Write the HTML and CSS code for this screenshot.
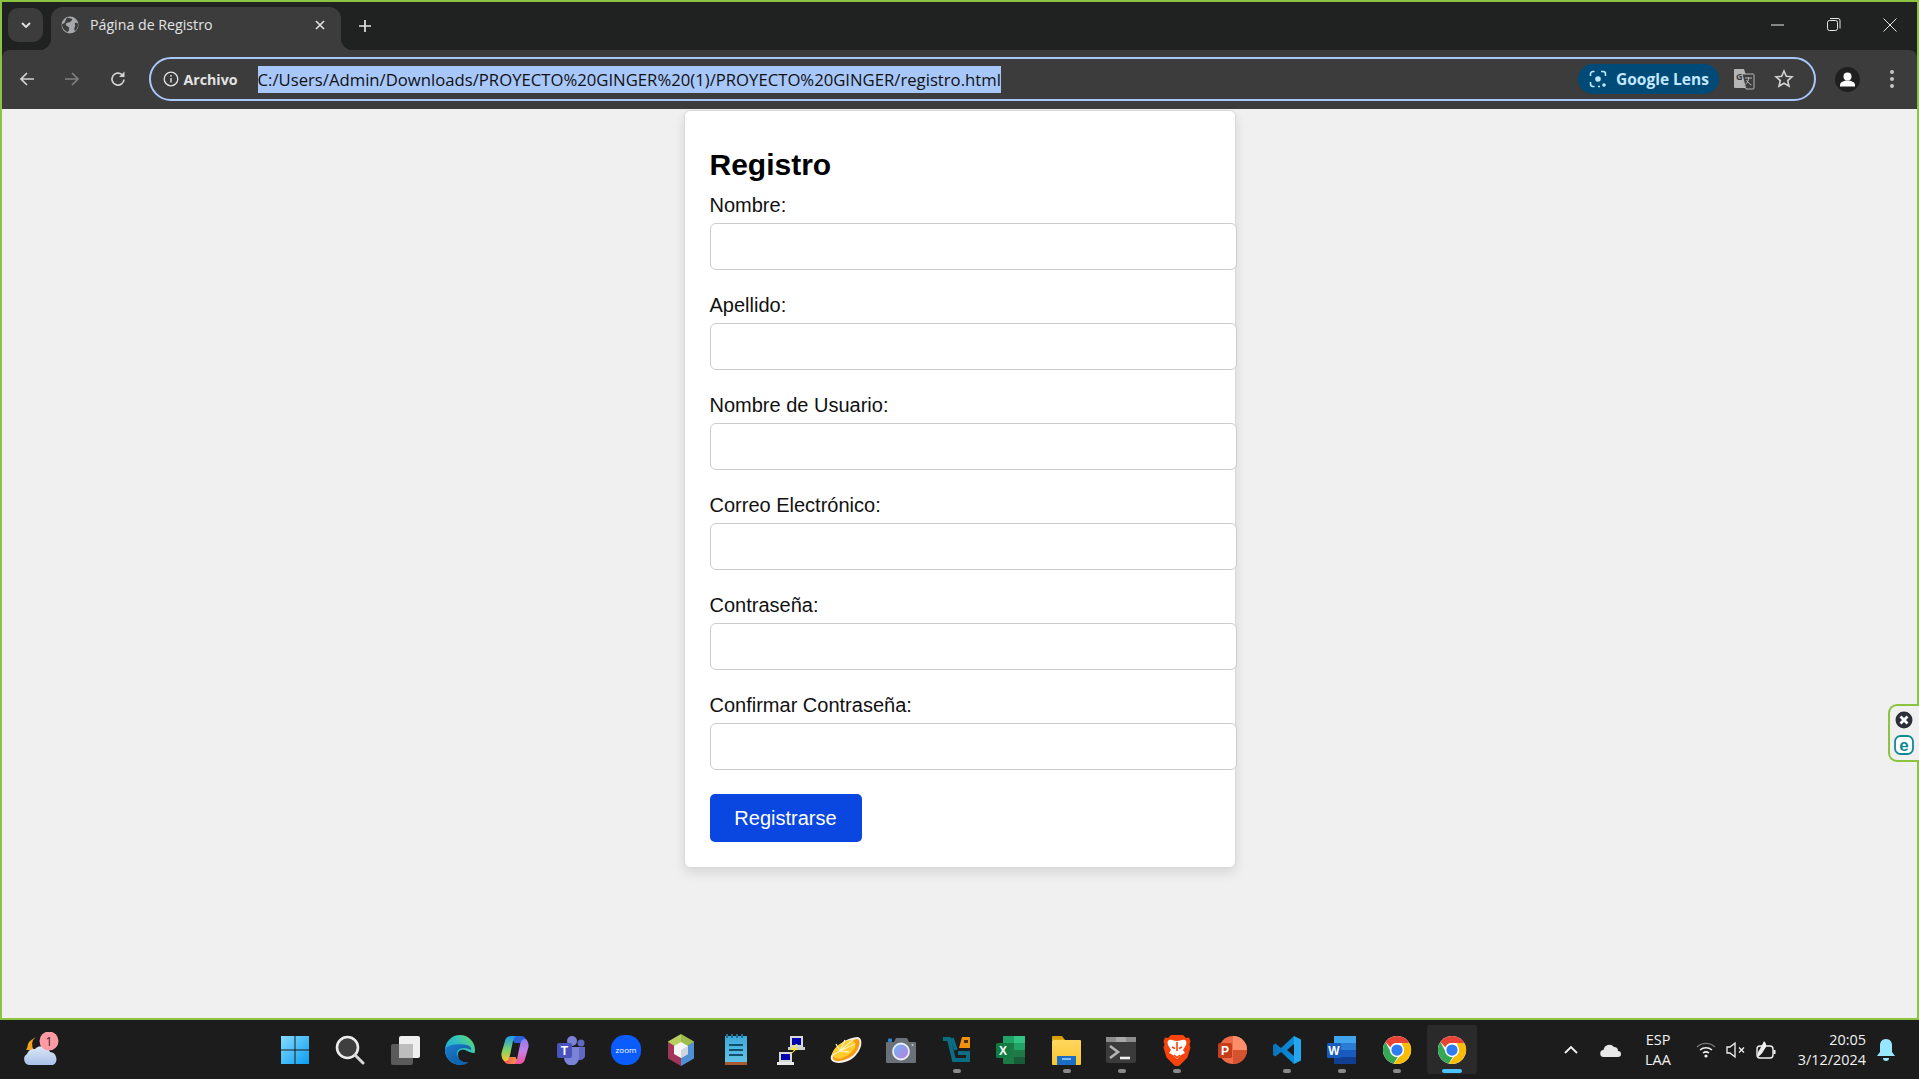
FILE: index.html
```html
<!DOCTYPE html>
<html lang="es">
  <head>
    <meta charset="UTF-8" />
    <meta name="viewport" content="width=device-width, initial-scale=1.0" />
    <title>Página de Registro</title>
    <link rel="stylesheet" href="styles.css">
  </head>
  <body>
    <!-- Shared icons -->
    <svg class="defs" width="0" height="0">
      <defs>
        <linearGradient id="winGrad" x1="0" y1="0" x2="1" y2="1"><stop offset="0" stop-color="#86dcff"/><stop offset="1" stop-color="#0a9df0"/></linearGradient>
        <linearGradient id="edgeTop" x1="0" y1="1" x2="1" y2="0"><stop offset="0" stop-color="#1b9de2"/><stop offset=".6" stop-color="#2fc0c0"/><stop offset="1" stop-color="#6ee05c"/></linearGradient>
        <linearGradient id="edgeLow" x1="0" y1="0" x2="1" y2="1"><stop offset="0" stop-color="#1c7fd0"/><stop offset="1" stop-color="#0c4f96"/></linearGradient>
        <linearGradient id="copA" x1="0" y1="0" x2="0" y2="1"><stop offset="0" stop-color="#1a9af0"/><stop offset=".55" stop-color="#7dd36a"/><stop offset="1" stop-color="#f7c632"/></linearGradient>
        <linearGradient id="copB" x1="0" y1="0" x2="0" y2="1"><stop offset="0" stop-color="#8f7cf0"/><stop offset=".5" stop-color="#c77fe6"/><stop offset="1" stop-color="#f0509a"/></linearGradient>
        <linearGradient id="copC" x1="0" y1="0" x2="1" y2="0"><stop offset="0" stop-color="#f04a5c"/><stop offset="1" stop-color="#f9a03c"/></linearGradient>
        <linearGradient id="folderGrad" x1="0" y1="0" x2="0" y2="1"><stop offset="0" stop-color="#ffd65e"/><stop offset="1" stop-color="#fbc531"/></linearGradient>
        <linearGradient id="noteGrad" x1="0" y1="0" x2="0" y2="1"><stop offset="0" stop-color="#3fa9d8"/><stop offset="1" stop-color="#62c4e6"/></linearGradient>
        <linearGradient id="cloudGrad" x1="0" y1="0" x2="0" y2="1"><stop offset="0" stop-color="#dce7f7"/><stop offset="1" stop-color="#a9c2ea"/></linearGradient>
        <linearGradient id="lensGrad" x1="0" y1="0" x2="1" y2="1"><stop offset="0" stop-color="#6ab8f0"/><stop offset="1" stop-color="#c07ae0"/></linearGradient>
        <linearGradient id="codeGrad" x1="0" y1="0" x2="1" y2="0"><stop offset="0" stop-color="#0a72b8"/><stop offset="1" stop-color="#0c8fdc"/></linearGradient>
        <symbol id="chromeIcon" viewBox="0 0 32 32">
          <circle cx="16" cy="16" r="15" fill="#fff"/>
          <path d="M16 1a15 15 0 0 1 13 7.500H16a7.500 7.500 0 0 0-7 4.700L3.700 7.400A15 15 0 0 1 16 1z" fill="#ea4335"/>
          <path d="M3.700 7.400 10 19.500a7.500 7.500 0 0 0 6.800 4L12.500 30.500A15 15 0 0 1 3.700 7.400z" fill="#34a853"/>
          <path d="M29 8.500a15 15 0 0 1-16.500 22L18.800 23a7.500 7.500 0 0 0 3.400-11l-1-3.500z" fill="#fbbc04"/>
          <circle cx="16" cy="16" r="7.500" fill="#fff"/>
          <circle cx="16" cy="16" r="6" fill="#2f7cf0"/>
        </symbol>
      </defs>
    </svg>

    <div class="window">
      <!-- Title bar -->
      <header class="titlebar">
        <div class="tab-search">
          <svg width="12" height="12" viewBox="0 0 12 12"><path d="M2 4l4 4 4-4" fill="none" stroke="#e3e3e3" stroke-width="1.800"/></svg>
        </div>
        <div class="tab">
          <svg class="favicon" width="18" height="18" viewBox="0 0 18 18">
            <circle cx="9" cy="9" r="8.500" fill="#a6a8ab"/>
            <path d="M6 1.500c2 1 4 .500 5 1.500s-1 2-2 3-3 0-4 1.500 1 2.500 2.500 3.500.500 3-.500 5C3 15 .800 11 1 8c1-.500 2.500-.500 3-2s1-3 2-4.500zM14 7c1.500-.500 2.500 0 3 1 .200 3-1 5.500-3 7-1-1.500-1-3 0-4.500s-1-2 0-3.500z" fill="#3c3c3c"/>
          </svg>
          <span class="tab-title">Página de Registro</span>
          <svg class="tab-close" width="12" height="12" viewBox="0 0 12 12"><path d="M2 2l8 8M10 2l-8 8" stroke="#e3e3e3" stroke-width="1.600"/></svg>
        </div>
        <svg class="new-tab" width="14" height="14" viewBox="0 0 14 14"><path d="M7 1v12M1 7h12" stroke="#e3e3e3" stroke-width="1.700"/></svg>
        <div class="win-controls">
          <span class="win-btn"><svg width="14" height="14" viewBox="0 0 14 14"><path d="M0 7h13" stroke="#e8e8e8" stroke-width="1"/></svg></span>
          <span class="win-btn"><svg width="14" height="14" viewBox="0 0 14 14"><rect x=".5" y="2.500" width="10" height="10" rx="2" fill="none" stroke="#e8e8e8"/><path d="M3 .5h8a2 2 0 0 1 2 2v8" fill="none" stroke="#e8e8e8"/></svg></span>
          <span class="win-btn"><svg width="14" height="14" viewBox="0 0 14 14"><path d="M.5.5l13 13M13.500.5l-13 13" stroke="#e8e8e8"/></svg></span>
        </div>
      </header>

      <!-- Toolbar -->
      <nav class="toolbar">
        <span class="nav-btn"><svg width="18" height="18" viewBox="0 0 18 18"><path d="M16 9H3M9 3 3 9l6 6" fill="none" stroke="#d2d2d2" stroke-width="1.700"/></svg></span>
        <span class="nav-btn"><svg width="18" height="18" viewBox="0 0 18 18"><path d="M2 9h13M9 3l6 6-6 6" fill="none" stroke="#808080" stroke-width="1.700"/></svg></span>
        <span class="nav-btn"><svg width="18" height="18" viewBox="0 0 18 18"><path d="M15 9.500A6 6 0 1 1 13 4.600" fill="none" stroke="#d2d2d2" stroke-width="1.700"/><path d="M15.500 1.500v5.500H10z" fill="#d2d2d2"/></svg></span>
        <div class="address">
          <svg width="16" height="16" viewBox="0 0 16 16"><circle cx="8" cy="8" r="6.800" fill="none" stroke="#e3e3e3" stroke-width="1.300"/><path d="M8 7v4.500" stroke="#e3e3e3" stroke-width="1.400"/><circle cx="8" cy="4.800" r=".9" fill="#e3e3e3"/></svg>
          <span class="scheme">Archivo</span>
          <span class="url">C:/Users/Admin/Downloads/PROYECTO%20GINGER%20(1)/PROYECTO%20GINGER/registro.html</span>
          <span class="lens">
            <svg width="18" height="18" viewBox="0 0 18 18"><path d="M1.500 6V4a2.500 2.500 0 0 1 2.500-2.500h1.500M12 1.500h2A2.500 2.500 0 0 1 16.500 4v2M1.500 12v2A2.500 2.500 0 0 0 4 16.500h1.500M9 16.500h2" fill="none" stroke="#c2e7ff" stroke-width="1.600"/><circle cx="9" cy="9" r="2.800" fill="#c2e7ff"/><circle cx="15" cy="15" r="1.800" fill="#c2e7ff"/></svg>
            <span>Google Lens</span>
          </span>
          <svg class="translate" width="22" height="22" viewBox="0 0 22 22">
            <path d="M1 2a1 1 0 0 1 1-1h9l6 19H2a1 1 0 0 1-1-1z" fill="#b5b5b5"/>
            <path d="M9 6h11a1 1 0 0 1 1 1v13a1 1 0 0 1-1 1h-7l-1-3z" fill="#3c3c3c" stroke="#b5b5b5"/>
            <text x="3" y="12" class="translate-g">G</text>
            <path d="M12 10h7M15.500 9v1.500c0 2-1.500 5-3 6M13.500 12c1 2 3 4 5 5" fill="none" stroke="#b5b5b5"/>
          </svg>
          <svg class="star" width="20" height="20" viewBox="0 0 20 20"><path d="M10 2l2.300 5.300 5.700.5-4.300 3.800 1.300 5.600-5-3-5 3 1.300-5.600L2 7.800l5.700-.5z" fill="none" stroke="#d2d2d2" stroke-width="1.600"/></svg>
        </div>
        <span class="avatar-btn">
          <svg width="25" height="25" viewBox="0 0 25 25"><circle cx="12.500" cy="12.500" r="12.500" fill="#1f1f1f"/><circle cx="12.500" cy="9.500" r="4" fill="#fff"/><path d="M5 18c0-3 4-4.500 7.500-4.500S20 15 20 18v1.500H5z" fill="#fff"/></svg>
        </span>
        <span class="menu-btn"><i></i><i></i><i></i></span>
      </nav>

      <!-- Page -->
      <main class="page">
        <div class="card">
          <h1>Registro</h1>
          <form>
            <div class="field">
              <label for="nombre">Nombre:</label>
              <input type="text" id="nombre" />
            </div>
            <div class="field">
              <label for="apellido">Apellido:</label>
              <input type="text" id="apellido" />
            </div>
            <div class="field">
              <label for="usuario">Nombre de Usuario:</label>
              <input type="text" id="usuario" />
            </div>
            <div class="field">
              <label for="correo">Correo Electrónico:</label>
              <input type="email" id="correo" />
            </div>
            <div class="field">
              <label for="clave">Contraseña:</label>
              <input type="password" id="clave" />
            </div>
            <div class="field">
              <label for="confirmar">Confirmar Contraseña:</label>
              <input type="password" id="confirmar" />
            </div>
            <button type="submit">Registrarse</button>
          </form>
        </div>

        <!-- Browser extension tab on the edge -->
        <aside class="side-widget">
          <svg width="18" height="18" viewBox="0 0 18 18"><circle cx="9" cy="9" r="8.500" fill="#2b3038"/><path d="M5.500 5.500l7 7M12.500 5.500l-7 7" stroke="#fff" stroke-width="2.800"/></svg>
          <svg width="20" height="20" viewBox="0 0 20 20"><rect x="1" y="1" width="18" height="18" rx="5.500" fill="#fff" stroke="#0f8a94" stroke-width="1.800"/><text x="10" y="15.500" class="eset-e">e</text></svg>
        </aside>
      </main>
    </div>

    <!-- Taskbar -->
    <footer class="taskbar">
      <div class="weather">
        <svg width="36" height="36" viewBox="0 0 36 36">
          <path d="M13 5a9 9 0 0 0-2 13L3 18c2-2 1-5 3-8 2-2 5-4 7-5z" fill="#f5a21b"/>
          <path d="M6 33a6 6 0 0 1-2-11 7 7 0 0 1 8-5 9 9 0 0 1 15 3 7 7 0 0 1 3 13z" fill="url(#cloudGrad)"/>
          <circle cx="26" cy="9" r="9.500" fill="#ff9aa5"/>
          <text x="26" y="13.500" class="badge-num">1</text>
        </svg>
      </div>
      <div class="apps">
        <span class="app"><svg width="30" height="30" viewBox="0 0 30 30"><path d="M1 1h13.500v13.500H1zM15.500 1H29v13.500H15.500zM1 15.500h13.500V29H1zM15.500 15.500H29V29H15.500z" fill="url(#winGrad)"/></svg></span>
        <span class="app"><svg width="30" height="30" viewBox="0 0 30 30"><circle cx="12.500" cy="12.500" r="10.500" fill="#3f3f3f" stroke="#ececec" stroke-width="2.600"/><path d="M20 20l8 8" stroke="#d8d8d8" stroke-width="3" stroke-linecap="round"/></svg></span>
        <span class="app"><svg width="30" height="30" viewBox="0 0 30 30"><rect x="1" y="9" width="22" height="21" rx="2" fill="#5a5a5a"/><rect x="9" y="1" width="21" height="22" rx="2" fill="#efefef"/><rect x="9" y="9" width="14" height="14" fill="#bdbdbd"/></svg></span>
        <span class="app"><svg width="32" height="32" viewBox="0 0 32 32">
          <circle cx="16" cy="16" r="15" fill="url(#edgeTop)"/>
          <path d="M1 16c0 8 7 15 16 15 3 0 6-1 8-3-5 1-11-1-12-7-1-4 2-7 7-7 3 0 5 1 7 2 1-2-1-4-4-5-4-1-11-1-16 0-3 1-6 3-6 5z" fill="url(#edgeLow)"/>
          <path d="M14 20c0-3 3-5 7-4 3 1 5 3 10 3v5l-5 8h-6c-4-3-6-8-6-12z" fill="#1c1c1c"/>
          <path d="M13 21c1 5 6 8 12 7-2 2-5 3-8 3-2 0-4-.500-5-1-1-3-1-6 1-9z" fill="#0f66b0"/>
        </svg></span>
        <span class="app"><svg width="30" height="32" viewBox="0 0 30 32">
          <path d="M11 2h10c3 0 5 2 6 5l1.500 5c-1-2-3-3-5-3h-9z" fill="#2a62d8"/>
          <path d="M19 30H9c-3 0-5-2-6-5l-1.500-5c1 2 3 3 5 3h9z" fill="url(#copC)"/>
          <path d="M11 2h6c-2 0-3 2-4 5l-3 14c-1 4-2 6-5 6-2 0-4-4-3.500-8L5 7c.500-3 3-5 6-5z" fill="url(#copA)"/>
          <path d="M19 30h-6c2 0 3-2 4-5l3-14c1-4 2-6 5-6 2 0 4 4 3.500 8L25 25c-.500 3-3 5-6 5z" fill="url(#copB)"/>
        </svg></span>
        <span class="app"><svg width="30" height="30" viewBox="0 0 30 30"><circle cx="16" cy="6" r="5" fill="#7b83d6"/><circle cx="25" cy="8" r="3.500" fill="#5f68c4"/><path d="M19 12h10v9a5 5 0 0 1-8 3z" fill="#5f68c4"/><path d="M8 12h15v11a7 7 0 0 1-15 0z" fill="#7b83d6"/><rect x="1" y="8" width="15" height="15" rx="2" fill="#4a53bc"/><text x="8.500" y="20" class="app-letter">T</text></svg></span>
        <span class="app"><svg width="32" height="32" viewBox="0 0 32 32"><rect x="1" y="1" width="30" height="30" rx="14" fill="#0b5cff"/><text x="16" y="18.500" class="zoom-text">zoom</text></svg></span>
        <span class="app"><svg width="28" height="32" viewBox="0 0 28 32"><path d="M14 0 27 7.500v1L14 16z" fill="#9cbc4c"/><path d="M14 0 1 7.500v1L14 16z" fill="#b6cf60"/><path d="M1 8l13 8v16L1 24.500z" fill="#a3345a"/><path d="M27 8 14 16v16l13-7.500z" fill="#4f8fd6"/><path d="M14 8l7 4v8l-7 4-7-4v-8z" fill="#f5f5f5"/><path d="M14 16l7-4v8l-7 4z" fill="#cfd6dd"/></svg></span>
        <span class="app"><svg width="24" height="32" viewBox="0 0 24 32"><rect x="1" y="2" width="22" height="27" fill="url(#noteGrad)"/><path d="M3 0v4M8 0v4M13 0v4M18 0v4" stroke="#1f6f94" stroke-width="2"/><path d="M5 11h14M5 16h14M5 21h14" stroke="#124f70" stroke-width="2"/><rect x="1" y="28" width="22" height="3" fill="#a85a30"/></svg></span>
        <span class="app"><svg width="30" height="30" viewBox="0 0 30 30"><rect x="14" y="1" width="13" height="11" fill="#d8d8d8"/><rect x="16" y="3" width="9" height="7" fill="#0000b0"/><path d="M12 12h17v3H12z" fill="#cfcfcf"/><rect x="3" y="17" width="13" height="10" fill="#d8d8d8"/><rect x="5" y="19" width="9" height="6" fill="#0000b0"/><path d="M1 27h17v3H1z" fill="#e8e8e8"/><path d="M20 9l-6 6h4l-5 6 9-8h-4l4-4z" fill="#f5ea2e"/></svg></span>
        <span class="app"><svg width="32" height="28" viewBox="0 0 32 28">
          <path d="M1 20C5 10 16 2 27 1c4 0 5 4 4 9-2 7-8 14-16 16-7 2-16 1-14-6z" fill="#f6f1ea"/>
          <path d="M3 20C6 11 17 4 27 3c3 0 3 4 2 7-2 7-8 12-15 14-6 2-13 1-11-4z" fill="#f79a0c"/>
          <ellipse cx="14" cy="13.500" rx="13" ry="7" transform="rotate(-33 14 13.500)" fill="#ffcb2e"/>
          <path d="M10 15 3 19M10 15 6 8M10 15 15 4M10 15 24 3M10 15 25 8M10 15 19 16" stroke="#fff3b8" stroke-width="1.300"/>
        </svg></span>
        <span class="app"><svg width="30" height="28" viewBox="0 0 30 28">
          <path d="M1 6h7l2-4h11l2 4h6a1 1 0 0 1 1 1v19a1 1 0 0 1-1 1H1a1 1 0 0 1-1-1V7a1 1 0 0 1 1-1z" fill="#6b7178"/>
          <rect x="2" y="2.500" width="4" height="3.500" rx="1" fill="#1e88d8"/>
          <circle cx="15" cy="15.500" r="8" fill="url(#lensGrad)" stroke="#e8edf5" stroke-width="1.800"/>
          <circle cx="26.500" cy="9" r="1" fill="#ccc"/>
        </svg></span>
        <span class="app app-running"><svg width="30" height="30" viewBox="0 0 30 30">
          <path d="M2 4h6l5 21h14v-7H17" fill="none" stroke="#0b6d84" stroke-width="4"/>
          <path d="M11 3l4 12" stroke="#0b6d84" stroke-width="3.500"/>
          <path d="M18 13l3-11h8v11z" fill="#f0920c"/>
          <rect x="23" y="5" width="4" height="3" fill="#4b2f08"/>
        </svg></span>
        <span class="app"><svg width="30" height="30" viewBox="0 0 30 30"><rect x="7" y="1" width="22" height="28" rx="1.500" fill="#1d7a47"/><rect x="18" y="1" width="11" height="7" fill="#33c481"/><rect x="7" y="1" width="11" height="7" fill="#21a366"/><rect x="18" y="8" width="11" height="7" fill="#21a366"/><rect x="18" y="22" width="11" height="7" fill="#185c37"/><rect x="0" y="8" width="14" height="15" rx="1.500" fill="#107c41"/><text x="7" y="20" class="app-letter">X</text></svg></span>
        <span class="app app-running"><svg width="30" height="32" viewBox="0 0 30 32"><path d="M1 3a1 1 0 0 1 1-1h9l3 4h-13z" fill="#d8a008"/><rect x="1" y="6" width="29" height="25" rx="1" fill="url(#folderGrad)"/><path d="M1 6h13l-2-1H1z" fill="#e3ad10"/><path d="M6 22h19v9H6z" fill="#1a6fc4"/><path d="M11 25h9" stroke="#a7d6ff" stroke-width="1.500"/></svg></span>
        <span class="app app-running"><svg width="30" height="26" viewBox="0 0 30 26"><rect width="30" height="26" rx="2.500" fill="#3b3b3b"/><rect width="30" height="5" fill="#8d8d8d"/><rect x="10" width="10" height="5" fill="#a8a8a8"/><path d="M4 9l8 6-8 6" fill="none" stroke="#b5b5b5" stroke-width="2.600"/><path d="M14 21h10" stroke="#f2f2f2" stroke-width="2.600"/></svg></span>
        <span class="app app-running"><svg width="28" height="32" viewBox="0 0 28 32">
          <path d="M8 1h12l3 3 3-.5 1.500 4-1 3 1 3-3 10-8 8-2.500 1-2.500-1-8-8-3-10 1-3-1-3L2 3.500 5 4z" fill="#f9430c"/>
          <path d="M14 7c2 0 6-2 8-1s1.500 3 1 5l-3 5 2 3-4 2-4 4-4-4-4-2 2-3-3-5c-.500-2-1-4 1-5s6 1 8 1z" fill="#fff"/>
          <path d="M9 13l3 1.500M19 13l-3 1.500M14 8v9M11 21l3 2.500 3-2.500" stroke="#f9430c" stroke-width="1.600" fill="none"/>
        </svg></span>
        <span class="app"><svg width="30" height="30" viewBox="0 0 30 30"><circle cx="16" cy="15" r="14" fill="#ed6c47"/><path d="M16 1a14 14 0 0 1 14 14H16z" fill="#ff8f6b"/><path d="M16 15h14a14 14 0 0 1-14 14z" fill="#d35230"/><rect x="1" y="8" width="14" height="15" rx="1.500" fill="#c43e1c"/><text x="8" y="20" class="app-letter">P</text></svg></span>
        <span class="app app-running"><svg width="30" height="30" viewBox="0 0 30 30"><path d="M22 1 9 13 3.500 8.500 1 10v10l2.500 1.500L9 17l13 12 1-7-8-7 8-7z" fill="url(#codeGrad)"/><path d="M22 1l7 3.500v21L22 29z" fill="#22a7f0"/></svg></span>
        <span class="app app-running"><svg width="30" height="30" viewBox="0 0 30 30"><rect x="7" y="1" width="22" height="28" rx="1.500" fill="#2b7cd3"/><rect x="7" y="1" width="22" height="7" fill="#41a5ee"/><rect x="7" y="15" width="22" height="7" fill="#185abd"/><rect x="7" y="22" width="22" height="7" fill="#103f91"/><rect x="0" y="8" width="14" height="15" rx="1.500" fill="#185abd"/><text x="7" y="20" class="app-letter">W</text></svg></span>
        <span class="app app-running"><svg width="30" height="30"><use href="#chromeIcon"/></svg></span>
        <span class="app app-active"><svg width="30" height="30"><use href="#chromeIcon"/></svg></span>
      </div>
      <div class="tray">
        <span class="tray-item tray-wide"><svg width="16" height="12" viewBox="0 0 16 12"><path d="M2 9l6-6 6 6" fill="none" stroke="#f2f2f2" stroke-width="1.800"/></svg></span>
        <span class="tray-item tray-wide"><svg width="22" height="16" viewBox="0 0 22 16"><path d="M4 15a3.500 3.500 0 0 1-.5-7A6 6 0 0 1 14 5a4 4 0 0 1 4 4 3 3 0 0 1 0 6z" fill="#e8e8e8"/></svg></span>
        <span class="lang">ESP<br>LAA</span>
        <span class="tray-item"><svg width="20" height="18" viewBox="0 0 20 18"><path d="M1 6a13 13 0 0 1 18 0" fill="none" stroke="#777" stroke-width="1.400"/><path d="M4 9a9 9 0 0 1 12 0M7 12a5 5 0 0 1 6 0" fill="none" stroke="#f2f2f2" stroke-width="1.500"/><circle cx="10" cy="15" r="1.600" fill="#f2f2f2"/></svg></span>
        <span class="tray-item"><svg width="20" height="18" viewBox="0 0 20 18"><path d="M1 6h3l5-4v14l-5-4H1z" fill="none" stroke="#f2f2f2" stroke-width="1.300"/><path d="M13 6.500l5 5M18 6.500l-5 5" stroke="#f2f2f2" stroke-width="1.300"/></svg></span>
        <span class="tray-item"><svg width="22" height="20" viewBox="0 0 22 20"><rect x="2" y="6" width="16" height="12" rx="3" fill="none" stroke="#f2f2f2" stroke-width="1.400"/><rect x="18.500" y="10" width="2" height="4" fill="#f2f2f2"/><path d="M9 1c3 3 3 6 0 9-1 2-3 5-6 7-1-3 0-6 2-8 1-3 3-5 4-8z" fill="#f2f2f2"/><path d="M11 8l-3 9" stroke="#1c1c1c" stroke-width="1.400"/></svg></span>
        <span class="clock"><span>20:05</span><span>3/12/2024</span></span>
        <span class="tray-item tray-wide"><svg width="20" height="24" viewBox="0 0 20 24"><path d="M10 1c4 0 6 3 6 6v7l3 4H1l3-4V7c0-3 2-6 6-6z" fill="#96e7ff"/><path d="M7 20h6a3 3 0 0 1-6 0z" fill="#96e7ff"/></svg></span>
      </div>
    </footer>
  </body>
</html>
```

FILE: styles.css
```css
* {
  margin: 0;
  padding: 0;
  box-sizing: border-box;
}

html,
body {
  height: 100%;
  overflow: hidden;
}

body {
  font-family: "Open Sans", "Noto Sans", sans-serif;
  background-color: #1c1c1c;
}

.defs {
  display: block;
  height: 0;
}

.window {
  height: 1020px;
  display: flex;
  flex-direction: column;
  border: 2px solid #8bc53f;
  background-color: #202221;
}

/* Title bar */
.titlebar {
  height: 48px;
  flex: none;
  display: flex;
  align-items: flex-start;
  padding: 5px 0 0 6px;
  color: #e3e3e3;
}

.tab-search {
  width: 35px;
  height: 34px;
  margin-top: 1px;
  border-radius: 10px;
  background-color: #3c3c3c;
  display: flex;
  align-items: center;
  justify-content: center;
}

.tab {
  position: relative;
  width: 290px;
  height: 43px;
  margin-left: 8px;
  padding: 0 15px 8px 10px;
  display: flex;
  align-items: center;
  border-radius: 12px 12px 0 0;
  background-color: #3c3c3c;
}

.tab::before,
.tab::after {
  content: "";
  position: absolute;
  bottom: 0;
  width: 12px;
  height: 12px;
}

.tab::before {
  left: -12px;
  background: radial-gradient(circle at 0 0, transparent 12px, #3c3c3c 12.500px);
}

.tab::after {
  right: -12px;
  background: radial-gradient(circle at 100% 0, transparent 12px, #3c3c3c 12.500px);
}

.favicon {
  flex: none;
}

.tab-title {
  margin-left: 11px;
  font-size: 14.200px;
  white-space: nowrap;
  flex: 1;
}

.new-tab {
  margin: 12px 0 0 17px;
}

.win-controls {
  margin-left: auto;
  display: flex;
  margin-right: -1px;
}

.win-btn {
  width: 56px;
  height: 36px;
  display: flex;
  align-items: center;
  justify-content: center;
}

/* Toolbar */
.toolbar {
  height: 59px;
  flex: none;
  display: flex;
  align-items: center;
  padding: 0 3px 1px 2px;
  border-radius: 8px 8px 0 0;
  background-color: #3c3c3c;
}

.nav-btn {
  width: 45.500px;
  display: flex;
  justify-content: center;
}

.address {
  flex: 1;
  height: 44px;
  margin: 0 9px 0 8px;
  padding: 0 20px 0 12px;
  display: flex;
  align-items: center;
  border: 2.500px solid #a8c7fa;
  border-radius: 22px;
}

.scheme {
  margin-left: 5px;
  font-size: 14.200px;
  font-weight: 700;
  color: #e3e3e3;
}

.url {
  margin-left: 20px;
  height: 27px;
  line-height: 27px;
  font-size: 16.700px;
  white-space: nowrap;
  color: #111;
  background-color: #a8c7fa;
}

.lens {
  margin-left: auto;
  width: 141px;
  height: 30px;
  padding-left: 11px;
  display: flex;
  align-items: center;
  gap: 9px;
  border-radius: 15px;
  font-size: 15.500px;
  font-weight: 700;
  color: #c2e7ff;
  background-color: #004a77;
}

.translate {
  margin-left: 14px;
}

.translate-g {
  font-size: 9px;
  font-weight: 700;
  fill: #3c3c3c;
}

.star {
  margin-left: 19px;
}

.avatar-btn {
  width: 45px;
  display: flex;
  justify-content: center;
}

.menu-btn {
  width: 44px;
  display: flex;
  flex-direction: column;
  align-items: center;
  gap: 3px;
}

.menu-btn i {
  width: 4px;
  height: 4px;
  border-radius: 50%;
  background-color: #c4c4c4;
}

/* Page */
.page {
  flex: 1;
  position: relative;
  display: flex;
  justify-content: center;
  align-items: flex-start;
  font-family: "Liberation Sans", Arial, sans-serif;
  background-color: #f0f0f0;
}

.card {
  width: 552px;
  margin-top: 1px;
  padding: 25px;
  background-color: white;
  border: 1px solid #d9d9d9;
  border-radius: 6px;
  box-shadow: 0 5px 12px rgba(0, 0, 0, 0.1);
}

h1 {
  margin: 12px 0 12px;
  font-size: 30px;
  line-height: 34px;
  color: #000;
}

.field {
  margin-bottom: 24px;
}

label {
  display: block;
  margin-bottom: 6px;
  font-size: 20px;
  line-height: 23px;
  color: #111;
}

input {
  display: block;
  width: 100%;
  box-sizing: content-box;
  height: 21px;
  padding: 12px 12.500px;
  font-size: 16px;
  border: 1px solid #ccc;
  border-radius: 6px;
  background-color: white;
}

button {
  display: block;
  width: 152px;
  height: 48px;
  font-family: inherit;
  font-size: 20px;
  color: white;
  background-color: #0a47e0;
  border: none;
  border-radius: 5px;
  cursor: pointer;
}

.side-widget {
  position: absolute;
  right: -2px;
  top: 595px;
  width: 31px;
  height: 58px;
  padding-right: 2px;
  display: flex;
  flex-direction: column;
  align-items: center;
  justify-content: center;
  gap: 6px;
  background-color: #f0f0f0;
  border: 2px solid #8bc53f;
  border-right: none;
  border-radius: 9px 0 0 9px;
}

.eset-e {
  font-family: "Liberation Sans", sans-serif;
  font-size: 17px;
  font-weight: 700;
  text-anchor: middle;
  fill: #0f8a94;
}

/* Taskbar */
.taskbar {
  height: 59px;
  display: flex;
  align-items: center;
  background-color: #1c1c1c;
}

.weather {
  width: 267.500px;
  flex: none;
  padding-left: 23px;
  display: flex;
  align-items: center;
}

.badge-num {
  font-family: "Open Sans", sans-serif;
  font-size: 12px;
  text-anchor: middle;
  fill: #2a1a1a;
}

.apps {
  display: flex;
}

.app {
  position: relative;
  width: 55.100px;
  height: 49px;
  display: flex;
  align-items: center;
  justify-content: center;
}

.app-running::after,
.app-active::after {
  content: "";
  position: absolute;
  bottom: 1px;
  left: 24px;
  width: 8px;
  height: 4px;
  border-radius: 2px;
  background-color: #8a8a8a;
}

.app-active {
  background-color: #2a2a2a;
  border-radius: 5px;
  background-clip: content-box;
  padding: 0 3px;
}

.app-active::after {
  left: 18px;
  width: 20px;
  height: 4px;
  background-color: #4cc2ff;
}

.app-letter {
  font-family: "Liberation Sans", sans-serif;
  font-size: 12px;
  font-weight: 700;
  text-anchor: middle;
  fill: white;
}

.zoom-text {
  font-family: "Open Sans", sans-serif;
  font-size: 8px;
  text-anchor: middle;
  fill: white;
}

.tray {
  margin-left: auto;
  padding-right: 13px;
  display: flex;
  align-items: center;
  color: #f2f2f2;
}

.tray-item {
  width: 30px;
  display: flex;
  justify-content: center;
}

.tray-wide {
  width: 40px;
}

.lang {
  width: 60px;
  margin-right: 3px;
  margin-left: -3px;
  font-size: 14.500px;
  line-height: 20px;
  text-align: center;
}

.clock {
  width: 85px;
  display: flex;
  flex-direction: column;
  align-items: flex-end;
  font-size: 14.400px;
  line-height: 20px;
}
```
